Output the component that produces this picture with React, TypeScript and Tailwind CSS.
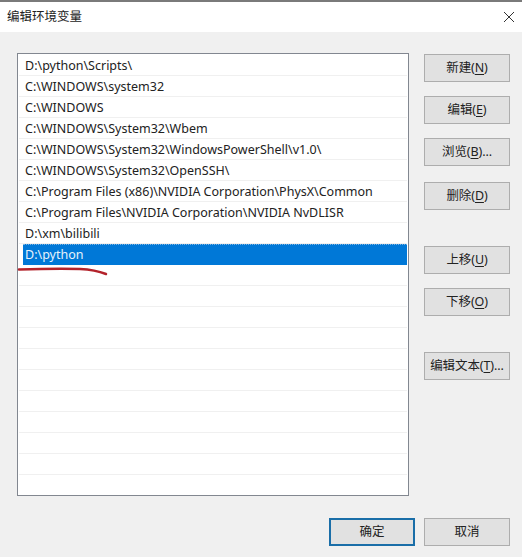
const font = "font-['Noto_Sans','Noto_Sans_CJK_SC',sans-serif]";

const paths = [
  "D:\\python\\Scripts\\",
  "C:\\WINDOWS\\system32",
  "C:\\WINDOWS",
  "C:\\WINDOWS\\System32\\Wbem",
  "C:\\WINDOWS\\System32\\WindowsPowerShell\\v1.0\\",
  "C:\\WINDOWS\\System32\\OpenSSH\\",
  "C:\\Program Files (x86)\\NVIDIA Corporation\\PhysX\\Common",
  "C:\\Program Files\\NVIDIA Corporation\\NVIDIA NvDLISR",
  "D:\\xm\\bilibili",
  "D:\\python",
];

const emptyRows = Array.from({ length: 11 }, (_, i) => i);

function Btn({
  label,
  hot,
  tail,
  className = "",
}: {
  label: string;
  hot?: string;
  tail?: string;
  className?: string;
}) {
  return (
    <button
      className={`flex h-[28px] w-[86px] shrink-0 items-center justify-center border bg-[#e1e1e1] text-[12.5px] tracking-[-0.1px] text-[#222] ${className}`}
    >
      {label}
      {hot && (
        <span>
          (<span className="underline underline-offset-2">{hot}</span>){tail}
        </span>
      )}
    </button>
  );
}

export default function App() {
  return (
    <div className={`relative flex h-[557px] w-[522px] flex-col overflow-hidden bg-[#f0f0f0] ${font}`}>
      <div className="flex h-[32px] shrink-0 items-center justify-between border-t-2 border-[#7a7a7a] bg-white pl-[7px] pr-[7px]">
        <span className="text-[12.5px] text-[#222]">编辑环境变量</span>
        <svg width="12" height="12" viewBox="0 0 12 12" fill="none" stroke="#333" strokeWidth="1">
          <path d="M1 1l10 10M11 1L1 11" />
        </svg>
      </div>

      <div className="flex pl-[17px] pt-[21px]">
        <div className="h-[443px] w-[392px] overflow-hidden border border-[#828790] bg-white pl-px pr-px pt-px">
          {paths.map((p, i) => (
            <div
              key={p}
              className={
                i === paths.length - 1
                  ? "ml-[4px] flex h-[21px] items-center border-t border-dotted border-[#7fb4e0] bg-[#0078d7] pl-[2px] pt-px text-[12.5px] text-[#e6f2fb]"
                  : "flex h-[21px] items-center border-b border-[#f0f0f0] pl-[6px] pt-[2px] text-[12.5px] text-[#222]"
              }
            >
              {p}
            </div>
          ))}
          {emptyRows.map((i) => (
            <div key={i} className="h-[21px] border-b border-[#f0f0f0]" />
          ))}
        </div>

        <div className="ml-[15px] flex flex-col pt-px">
          <Btn label="新建" hot="N" className="border-[#adadad]" />
          <Btn label="编辑" hot="E" className="mt-[14px] border-[#adadad]" />
          <Btn label="浏览" hot="B" tail="..." className="mt-[14px] border-[#adadad]" />
          <Btn label="删除" hot="D" className="mt-[16px] border-[#adadad]" />
          <Btn label="上移" hot="U" className="mt-[36px] border-[#adadad]" />
          <Btn label="下移" hot="O" className="mt-[14px] border-[#adadad]" />
          <Btn label="编辑文本" hot="T" tail="..." className="mt-[36px] border-[#adadad]" />
        </div>
      </div>

      <div className="flex justify-end gap-[9px] pr-[12px] pt-[22px]">
        <Btn label="确定" className="border-2 border-[#1a6ea8]" />
        <Btn label="取消" className="border-[#adadad]" />
      </div>

      {/* red pen mark under the selected row */}
      <svg className="absolute left-0 top-[260px]" width="120" height="20" viewBox="0 0 120 20" fill="none">
        <path
          d="M19 9.5C35 9 60 8.5 80 9C90 9.5 97 10.5 106 14"
          stroke="#b3222a"
          strokeWidth="2.5"
          strokeLinecap="round"
        />
      </svg>
    </div>
  );
}
